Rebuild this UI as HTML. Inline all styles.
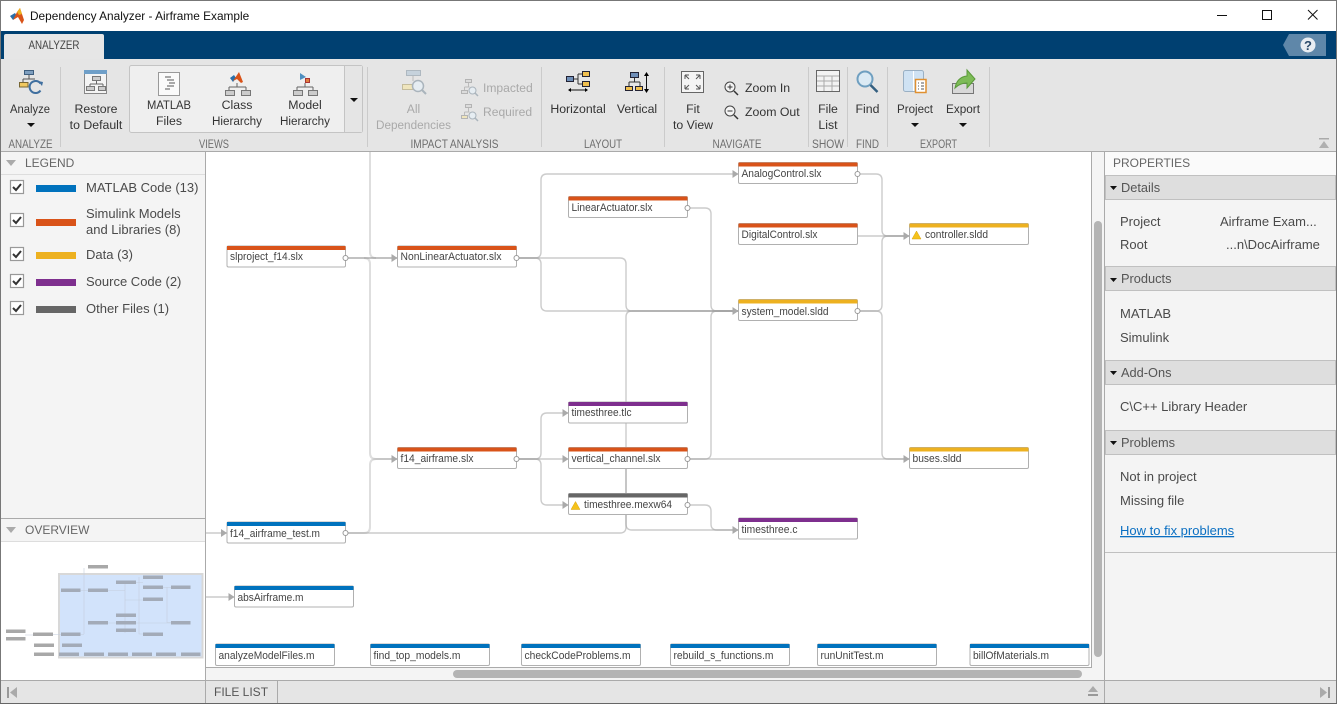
<!DOCTYPE html>
<html><head><meta charset="utf-8"><title>Dependency Analyzer - Airframe Example</title>
<style>
html,body{margin:0;padding:0;background:#fff;overflow:hidden}
svg{display:block;font-family:"Liberation Sans",Arial,sans-serif}
.b{font-size:12.300px;fill:#333}
.m{text-anchor:middle}
.g{font-size:11.500px;fill:#6e6e6e;text-anchor:middle}
.d{font-size:12.100px;fill:#a9a9a9}
.h{font-size:12px;fill:#666}
.s{font-size:12.800px;fill:#555}
.n{font-size:11px;fill:#444}
.l{font-size:13px;fill:#4a4a4a}
.w path{fill:none;stroke:#999;stroke-width:1.400;stroke-opacity:.5}
.w path.t{stroke-width:2;stroke-opacity:.32}
.a{fill:#aaa}
.p{fill:#fff;stroke:#999;stroke-width:1}
.nb{fill:#fff;stroke:#b0b0b0;stroke-width:1}
.o{fill:#a3abb8}
.o2{fill:#a8a8a8}
</style></head><body>
<svg xmlns="http://www.w3.org/2000/svg" width="1337" height="704" viewBox="0 0 1337 704">
<rect width="1337" height="704" fill="#fff"/>
<!-- title -->
<polygon points="10,16 15,13 17,16 13,20" fill="#2a6fa8"/>
<polygon points="13,20 17,12 20,8 24,20 22,24 18,17" fill="#d95319"/>
<polygon points="17,12 20,8 22,14 19,15" fill="#edb120"/>
<text x="30" y="20" style="font-size:11.850px" fill="#111">Dependency Analyzer - Airframe Example</text>
<rect x="1217" y="15" width="10" height="1" fill="#111"/>
<rect x="1262.500" y="10.500" width="9" height="9" fill="none" stroke="#111"/>
<path d="M1308 10l9.500 9.500M1317.500 10L1308 19.500" stroke="#111" fill="none"/>
<!-- blue bar -->
<rect x="0" y="31" width="1337" height="28" fill="#004071"/>
<path d="M4 59V36q0-2 2-2h96q2 0 2 2v23z" fill="#e6e6e6"/>
<text x="54" y="49" style="font-size:11.500px" fill="#444" text-anchor="middle" textLength="51" lengthAdjust="spacingAndGlyphs">ANALYZER</text>
<polygon points="1283,45 1289,34 1326,34 1326,56 1289,56" fill="#5f87a9"/>
<circle cx="1308" cy="45" r="7.500" fill="#e9edf2"/>
<text x="1308" y="50" style="font-size:13px" font-weight="bold" fill="#2b4a6a" text-anchor="middle">?</text>
<!-- ribbon -->
<rect x="0" y="59" width="1337" height="92" fill="#e5e5e5"/>
<rect x="0" y="151" width="1337" height="1" fill="#aaa"/>
<g fill="#cbcbcb">
<rect x="60" y="67" width="1" height="80"/><rect x="367" y="67" width="1" height="80"/><rect x="541" y="67" width="1" height="80"/><rect x="664" y="67" width="1" height="80"/><rect x="808" y="67" width="1" height="80"/><rect x="847" y="67" width="1" height="80"/><rect x="887" y="67" width="1" height="80"/><rect x="989" y="67" width="1" height="80"/>
</g>
<text class="g" x="30.500" y="148" textLength="44" lengthAdjust="spacingAndGlyphs">ANALYZE</text>
<text class="g" x="214" y="148" textLength="30" lengthAdjust="spacingAndGlyphs">VIEWS</text>
<text class="g" x="454.500" y="148" textLength="88" lengthAdjust="spacingAndGlyphs">IMPACT ANALYSIS</text>
<text class="g" x="603" y="148" textLength="38" lengthAdjust="spacingAndGlyphs">LAYOUT</text>
<text class="g" x="737" y="148" textLength="49" lengthAdjust="spacingAndGlyphs">NAVIGATE</text>
<text class="g" x="828" y="148" textLength="32" lengthAdjust="spacingAndGlyphs">SHOW</text>
<text class="g" x="867.500" y="148" textLength="23" lengthAdjust="spacingAndGlyphs">FIND</text>
<text class="g" x="938.500" y="148" textLength="37" lengthAdjust="spacingAndGlyphs">EXPORT</text>
<!-- gallery -->
<rect x="129.500" y="65.500" width="233" height="67" rx="2" fill="#efefef" stroke="#c4c4c4"/>
<rect x="344" y="66" width="18" height="66" fill="#e5e5e5"/>
<rect x="344" y="66" width="1" height="66" fill="#c4c4c4"/>
<polygon points="350,98 358,98 354,102" fill="#111"/>
<!-- analyze icon -->
<rect x="24.500" y="70.500" width="9" height="4" fill="#7f9fbf" stroke="#3f5f7f"/>
<path d="M29 75v4M23 79h12M23 79v3" stroke="#555" fill="none"/>
<rect x="19.500" y="82.500" width="8.500" height="4.500" fill="#f0c860" stroke="#776633"/>
<path d="M40.500 83.500A6 6 0 1 0 40.500 90.500" fill="none" stroke="#3f6f9f" stroke-width="2"/>
<path d="M38 81l5 1-1 4z" fill="#3f6f9f"/>
<text class="b m" x="30" y="113" textLength="40" lengthAdjust="spacingAndGlyphs">Analyze</text>
<polygon points="27,123 35,123 31,127" fill="#111"/>
<!-- restore icon -->
<rect x="84.500" y="70.500" width="22" height="23" fill="#f4f4f4" stroke="#888"/>
<rect x="84" y="70" width="23" height="4" fill="#6f9fc8"/>
<rect x="92.500" y="76.500" width="8" height="4" fill="#ccc" stroke="#777"/>
<path d="M96.500 81v3M90 84h13M90 84v2M103 84v2" stroke="#666" fill="none"/>
<rect x="86.500" y="86.500" width="8" height="4" fill="#ccc" stroke="#777"/>
<rect x="98.500" y="86.500" width="7" height="4" fill="#ccc" stroke="#777"/>
<text class="b m" x="96" y="113">Restore</text>
<text class="b m" x="96" y="129">to Default</text>
<!-- matlab files -->
<rect x="158.500" y="72.500" width="21" height="23" fill="#fafafa" stroke="#999"/>
<path d="M165 77h6M167 80h7M169 83h6M167 86h7M165 89h5" stroke="#555" fill="none"/>
<text class="b m" x="169" y="109" textLength="44" lengthAdjust="spacingAndGlyphs">MATLAB</text>
<text class="b m" x="169" y="125">Files</text>
<!-- class hierarchy -->
<polygon points="230,78 234,75 236,78 233,82" fill="#2a6fa8"/>
<polygon points="233,81 237,75 239,72 243,82 241,83 237,79" fill="#d95319"/>
<path d="M237 83v4M229 87h17M229 87v3M246 87v3" stroke="#666" fill="none"/>
<rect x="225.500" y="90.500" width="9" height="5" fill="#ccc" stroke="#777"/>
<rect x="241.500" y="90.500" width="9" height="5" fill="#ccc" stroke="#777"/>
<text class="b m" x="237" y="109">Class</text>
<text class="b m" x="237" y="125" textLength="50" lengthAdjust="spacingAndGlyphs">Hierarchy</text>
<!-- model hierarchy -->
<polygon points="300,73 300,80 306,77" fill="#4f8fc0"/>
<rect x="305.500" y="78.500" width="4" height="4" fill="#e08040" stroke="#a33"/>
<path d="M305 83v4M297 87h16M297 87v3M313 87v3" stroke="#666" fill="none"/>
<rect x="293.500" y="90.500" width="9" height="5" fill="#ccc" stroke="#777"/>
<rect x="308.500" y="90.500" width="9" height="5" fill="#ccc" stroke="#777"/>
<text class="b m" x="305" y="109">Model</text>
<text class="b m" x="305" y="125" textLength="50" lengthAdjust="spacingAndGlyphs">Hierarchy</text>
<!-- all deps -->
<rect x="406.500" y="70.500" width="14" height="5" fill="#c6d2dc" stroke="#aeb8c0"/>
<path d="M413 76v5" stroke="#bbb"/>
<rect x="402.500" y="84.500" width="11" height="5" fill="#efe5bd" stroke="#c4bc9c"/>
<circle cx="418" cy="86" r="5.500" fill="#e6edf2" stroke="#aab4bc" stroke-width="1.500"/>
<path d="M422 90l4 4" stroke="#aab4bc" stroke-width="2"/>
<text class="d m" x="413.500" y="113">All</text>
<text class="d m" x="413.500" y="129" textLength="75" lengthAdjust="spacingAndGlyphs">Dependencies</text>
<g stroke="#b4b4b4" fill="#dcdcdc">
<rect x="465.500" y="79.500" width="6" height="3"/><rect x="461.500" y="90.500" width="6" height="3"/>
<rect x="465.500" y="104.500" width="6" height="3"/><rect x="461.500" y="115.500" width="6" height="3" fill="#efe5bd"/>
</g>
<path d="M468.500 83v4M464.500 87h5M464.500 87v3M468.500 108v4M464.500 112h5M464.500 112v3" stroke="#bbb" fill="none"/>
<circle cx="472.500" cy="90.500" r="3.500" fill="#e6edf2" stroke="#aab4bc"/><path d="M475 93l3 3" stroke="#aab4bc" stroke-width="1.500"/>
<circle cx="472.500" cy="115.500" r="3.500" fill="#e6edf2" stroke="#aab4bc"/><path d="M475 118l3 3" stroke="#aab4bc" stroke-width="1.500"/>
<text class="d" x="483" y="92">Impacted</text>
<text class="d" x="483" y="116">Required</text>
<!-- horizontal -->
<rect x="566.500" y="76.500" width="7" height="5" fill="#6f8fb8" stroke="#223"/>
<rect x="582.500" y="71.500" width="7" height="5" fill="#f0c050" stroke="#223"/>
<rect x="582.500" y="81.500" width="7" height="5" fill="#f0c050" stroke="#223"/>
<path d="M574 79h4M578 74v10M578 74h4M578 84h4" stroke="#333" fill="none"/>
<path d="M569 90h16" stroke="#111"/><polygon points="568,90 571,88 571,92"/><polygon points="588,90 585,88 585,92"/>
<text class="b m" x="578" y="113">Horizontal</text>
<!-- vertical -->
<rect x="630.500" y="72.500" width="8" height="5" fill="#6f8fb8" stroke="#223"/>
<rect x="625.500" y="86.500" width="7" height="4" fill="#f0c050" stroke="#223"/>
<rect x="635.500" y="86.500" width="7" height="4" fill="#f0c050" stroke="#223"/>
<path d="M634.500 78v4M629 82h11M629 82v4M640 82v4" stroke="#333" fill="none"/>
<path d="M646.500 74v17" stroke="#111"/><polygon points="646.500,72 644,76 649,76"/><polygon points="646.500,93 644,89 649,89"/>
<text class="b m" x="637" y="113">Vertical</text>
<!-- fit -->
<rect x="681.500" y="71.500" width="22" height="21" fill="#f4f4f4" stroke="#666"/>
<path d="M685 75l4 4M685 75h4M685 75v4M700 75l-4 4M700 75h-4M700 75v4M685 89l4-4M685 89h4M685 89v-4M700 89l-4-4M700 89h-4M700 89v-4" stroke="#555" fill="none"/>
<text class="b m" x="693" y="113">Fit</text>
<text class="b m" x="693" y="129">to View</text>
<!-- zoom -->
<circle cx="730" cy="87" r="5" fill="#f4f4f4" stroke="#444"/><path d="M734 91l4 4" stroke="#333" stroke-width="1.500"/><path d="M727.500 87h5M730 84.500v5" stroke="#333"/>
<circle cx="730" cy="111" r="5" fill="#f4f4f4" stroke="#444"/><path d="M734 115l4 4" stroke="#333" stroke-width="1.500"/><path d="M727.500 111h5" stroke="#333"/>
<text class="b" x="745" y="92">Zoom In</text>
<text class="b" x="745" y="116">Zoom Out</text>
<!-- file list -->
<rect x="816.500" y="70.500" width="23" height="21" fill="#f2f2f2" stroke="#666"/>
<path d="M817 76h22M817 81h22M817 86h22M824 76v15M832 76v15" stroke="#aaa" fill="none"/>
<text class="b m" x="828" y="113">File</text>
<text class="b m" x="828" y="129">List</text>
<!-- find -->
<circle cx="865" cy="79" r="7.500" fill="#dbeaf4" stroke="#6f9fc0" stroke-width="2"/>
<path d="M870.500 85l7 7" stroke="#345f80" stroke-width="2.500"/>
<text class="b m" x="867.500" y="113">Find</text>
<!-- project -->
<rect x="903.500" y="70.500" width="20" height="21" rx="2" fill="#cfe2f3" stroke="#9ab0c4"/>
<path d="M913.500 71v20" stroke="#fff"/>
<rect x="915.500" y="79.500" width="10.500" height="13" fill="#fff" stroke="#e09030" stroke-width="1.500"/>
<path d="M918 83h1M921 83h3M918 86h1M921 86h3M918 89h1M921 89h3" stroke="#555"/>
<text class="b m" x="915" y="113" textLength="36" lengthAdjust="spacingAndGlyphs">Project</text>
<polygon points="911,123 919,123 915,127" fill="#111"/>
<!-- export -->
<rect x="952.500" y="83.500" width="21" height="10" fill="#d8d8d8" stroke="#777"/>
<path d="M955 88q2-11 12-12v-6l8 9-8 9v-5q-7 0-12 5z" fill="#7dbb57" stroke="#5a9a3a"/>
<text class="b m" x="963" y="113" textLength="34" lengthAdjust="spacingAndGlyphs">Export</text>
<polygon points="959,123 967,123 963,127" fill="#111"/>
<rect x="1319" y="138" width="10" height="1.500" fill="#aaa"/>
<polygon points="1319,148 1329,148 1324,141" fill="#b0b0b0"/>

<!-- left panel -->
<rect x="1" y="152" width="204" height="367" fill="#f4f4f4"/>
<rect x="1" y="174" width="204" height="1" fill="#ddd"/>
<polygon points="6,160 16,160 11,166" fill="#aaa"/>
<text class="h" x="25" y="167">LEGEND</text>
<g fill="#fff" stroke="#999" stroke-width="1.200">
<rect x="10.500" y="180.500" width="13" height="13"/><rect x="10.500" y="213.500" width="13" height="13"/><rect x="10.500" y="247.500" width="13" height="13"/><rect x="10.500" y="274.500" width="13" height="13"/><rect x="10.500" y="301.500" width="13" height="13"/>
</g>
<g fill="none" stroke="#333" stroke-width="2">
<path d="M13 187l3 3 5-6"/><path d="M13 220l3 3 5-6"/><path d="M13 254l3 3 5-6"/><path d="M13 281l3 3 5-6"/><path d="M13 308l3 3 5-6"/>
</g>
<rect x="36" y="185" width="40" height="7" fill="#0072bd"/>
<rect x="36" y="219" width="40" height="7" fill="#d95319"/>
<rect x="36" y="252" width="40" height="7" fill="#edb120"/>
<rect x="36" y="279" width="40" height="7" fill="#7e2f8e"/>
<rect x="36" y="306" width="40" height="7" fill="#666"/>
<text class="l" x="86" y="192">MATLAB Code (13)</text>
<text class="l" x="86" y="218">Simulink Models</text>
<text class="l" x="86" y="234">and Libraries (8)</text>
<text class="l" x="86" y="259">Data (3)</text>
<text class="l" x="86" y="286">Source Code (2)</text>
<text class="l" x="86" y="313">Other Files (1)</text>
<!-- overview -->
<rect x="1" y="518" width="204" height="1" fill="#aaa"/>
<rect x="1" y="519" width="204" height="22" fill="#f4f4f4"/>
<rect x="1" y="541" width="204" height="1" fill="#ddd"/>
<polygon points="6,527 16,527 11,533" fill="#aaa"/>
<text class="h" x="25" y="534">OVERVIEW</text>
<rect x="59" y="574" width="143.500" height="83.500" fill="#d2e3fb" stroke="#d8d8d8" stroke-width="2"/>
<g fill="none" stroke="#c4cedd" stroke-width=".6">
<path d="M80 590.500H88M108 590.500H125V600H143M125 584V600M136 582.500H143M125 622V600M108 623H116M125 615V633M136 623H171M139 577V634H143M84 568V634M80 634.500H84"/>
<path d="M163 587.500H171M167 587V622.500H171M25 635H33M53 634.500H61"/>
</g>
<g class="o">
<rect x="61" y="588.500" width="19.500" height="3.500"/><rect x="88" y="588.500" width="20" height="3.500"/><rect x="116" y="580.500" width="20" height="3.500"/><rect x="143" y="575.500" width="20" height="3.500"/><rect x="143" y="585.500" width="20" height="3.500"/><rect x="171" y="585.500" width="19.500" height="3.500"/><rect x="143" y="597.500" width="20" height="3.500"/><rect x="88" y="621" width="20" height="3.500"/><rect x="116" y="613.500" width="20" height="3.500"/><rect x="116" y="621" width="20" height="3.500"/><rect x="116" y="628.500" width="20" height="3.500"/><rect x="143" y="632.500" width="20" height="3.500"/><rect x="171" y="621" width="19.500" height="3.500"/><rect x="61" y="632.500" width="19.500" height="3.500"/><rect x="62" y="643.500" width="20" height="3.500"/><rect x="59" y="652.500" width="20" height="3.500"/><rect x="84" y="652.500" width="20" height="3.500"/><rect x="108" y="652.500" width="20" height="3.500"/><rect x="132" y="652.500" width="20" height="3.500"/><rect x="156" y="652.500" width="20" height="3.500"/><rect x="181" y="652.500" width="19.500" height="3.500"/>
</g>
<g class="o2">
<rect x="88" y="565" width="20" height="3.500"/><rect x="6" y="629.500" width="19.500" height="3.500"/><rect x="6" y="637" width="19.500" height="3.500"/><rect x="33" y="632.500" width="20" height="3.500"/><rect x="34" y="643.500" width="20" height="3.500"/><rect x="34" y="652.500" width="20" height="3.500"/>
</g>

<!-- canvas divider + scroll -->
<rect x="205" y="152" width="1" height="528" fill="#aaa"/>
<rect x="1092" y="152" width="13" height="528" fill="#f4f4f4"/>
<rect x="206" y="668" width="899" height="12" fill="#f4f4f4"/>
<rect x="206" y="667" width="886" height="1" fill="#aaa"/>
<rect x="1091" y="152" width="1" height="516" fill="#aaa"/>
<rect x="1104" y="152" width="1" height="528" fill="#aaa"/>
<rect x="1094" y="221" width="8" height="436" rx="4" fill="#b4b4b4"/>
<rect x="453" y="670" width="629" height="8" rx="4" fill="#b4b4b4"/>

<!-- wires -->
<g class="w">
<path d="M345 258H397"/>
<path d="M345 258H397"/>
<path class="t" d="M370 152V252Q370 258 376 258"/>
<path class="t" d="M370 264Q370 258 364 258"/>
<path class="t" d="M370 264V453Q370 459 376 459H397"/>
<path class="t" d="M370 465Q370 459 376 459H397"/>
<path class="t" d="M345 533H364Q370 533 370 527V465"/>
<path d="M345 533H620Q626 533 626 527V317Q626 311 632 311H738"/>
<path d="M517 258H535Q541 258 541 264V305Q541 311 547 311H738"/>
<path d="M517 258H535Q541 258 541 252V180Q541 174 547 174H738"/>
<path d="M517 258H620Q626 258 626 264V305Q626 311 632 311H738"/>
<path d="M688 208H705Q711 208 711 214V305Q711 311 717 311H738"/>
<path d="M688 459H705Q711 459 711 453V317Q711 311 717 311H738"/>
<path d="M688 459H909"/>
<path d="M858 174H876Q882 174 882 180V230Q882 236 888 236H909"/>
<path d="M858 236H909"/>
<path d="M858 311H876Q882 311 882 305V242Q882 236 888 236H909"/>
<path d="M858 311H876Q882 311 882 317V453Q882 459 888 459H909"/>
<path d="M517 459H568"/>
<path d="M517 459H535Q541 459 541 453V419Q541 413 547 413H568"/>
<path d="M517 459H535Q541 459 541 465V499Q541 505 547 505H568"/>
<path d="M688 505H705Q711 505 711 511V524Q711 530 717 530H738"/>
<path d="M626 469V524Q626 530 632 530H738"/>
<path d="M206 533H227"/>
<path d="M206 597H234"/>
</g>
<g class="a">
<polygon points="391.500,254 397.500,258 391.500,262"/><polygon points="391.500,455 397.500,459 391.500,463"/>
<polygon points="732.500,170 738.500,174 732.500,178"/><polygon points="732.500,307 738.500,311 732.500,315"/>
<polygon points="903.500,232 909.500,236 903.500,240"/><polygon points="903.500,455 909.500,459 903.500,463"/>
<polygon points="562.500,409 568.500,413 562.500,417"/><polygon points="562.500,455 568.500,459 562.500,463"/><polygon points="562.500,501 568.500,505 562.500,509"/>
<polygon points="732.500,526 738.500,530 732.500,534"/><polygon points="221,529 227,533 221,537"/><polygon points="228.500,593 234.500,597 228.500,601"/>
</g>

<!-- nodes -->
<g>
<rect class="nb" x="227" y="246" width="118.500" height="21" rx="1.500"/><rect x="227" y="246" width="118.500" height="4" fill="#d95319"/><text class="n" x="230" y="260" textLength="73" lengthAdjust="spacingAndGlyphs">slproject_f14.slx</text>
<rect class="nb" x="397.500" y="246" width="119" height="21" rx="1.500"/><rect x="397.500" y="246" width="119" height="4" fill="#d95319"/><text class="n" x="400.500" y="260" textLength="101" lengthAdjust="spacingAndGlyphs">NonLinearActuator.slx</text>
<rect class="nb" x="738.500" y="162.500" width="119" height="21" rx="1.500"/><rect x="738.500" y="162.500" width="119" height="4" fill="#d95319"/><text class="n" x="741.500" y="177" textLength="80" lengthAdjust="spacingAndGlyphs">AnalogControl.slx</text>
<rect class="nb" x="568.500" y="196.500" width="119" height="21" rx="1.500"/><rect x="568.500" y="196.500" width="119" height="4" fill="#d95319"/><text class="n" x="571.500" y="211" textLength="81" lengthAdjust="spacingAndGlyphs">LinearActuator.slx</text>
<rect class="nb" x="738.500" y="223.500" width="119" height="21" rx="1.500"/><rect x="738.500" y="223.500" width="119" height="4" fill="#d95319"/><text class="n" x="741.500" y="238" textLength="76" lengthAdjust="spacingAndGlyphs">DigitalControl.slx</text>
<rect class="nb" x="909.500" y="223.500" width="119" height="21" rx="1.500"/><rect x="909.500" y="223.500" width="119" height="4" fill="#edb120"/><text class="n" x="925" y="238" textLength="63" lengthAdjust="spacingAndGlyphs">controller.sldd</text>
<rect class="nb" x="738.500" y="299.500" width="119" height="21" rx="1.500"/><rect x="738.500" y="299.500" width="119" height="4" fill="#edb120"/><text class="n" x="741.500" y="315" textLength="87" lengthAdjust="spacingAndGlyphs">system_model.sldd</text>
<rect class="nb" x="568.500" y="402" width="119" height="21" rx="1.500"/><rect x="568.500" y="402" width="119" height="4" fill="#7e2f8e"/><text class="n" x="571.500" y="416" textLength="60" lengthAdjust="spacingAndGlyphs">timesthree.tlc</text>
<rect class="nb" x="397.500" y="447.500" width="119" height="21" rx="1.500"/><rect x="397.500" y="447.500" width="119" height="4" fill="#d95319"/><text class="n" x="400.500" y="462" textLength="73" lengthAdjust="spacingAndGlyphs">f14_airframe.slx</text>
<rect class="nb" x="568.500" y="447.500" width="119" height="21" rx="1.500"/><rect x="568.500" y="447.500" width="119" height="4" fill="#d95319"/><text class="n" x="571.500" y="462" textLength="89" lengthAdjust="spacingAndGlyphs">vertical_channel.slx</text>
<rect class="nb" x="909.500" y="447.500" width="119" height="21" rx="1.500"/><rect x="909.500" y="447.500" width="119" height="4" fill="#edb120"/><text class="n" x="912.500" y="462" textLength="49" lengthAdjust="spacingAndGlyphs">buses.sldd</text>
<rect class="nb" x="568.500" y="493.500" width="119" height="21" rx="1.500"/><rect x="568.500" y="493.500" width="119" height="4" fill="#666"/><text class="n" x="584" y="508" textLength="88" lengthAdjust="spacingAndGlyphs">timesthree.mexw64</text>
<rect class="nb" x="738.500" y="518" width="119" height="21" rx="1.500"/><rect x="738.500" y="518" width="119" height="4" fill="#7e2f8e"/><text class="n" x="741.500" y="533" textLength="56" lengthAdjust="spacingAndGlyphs">timesthree.c</text>
<rect class="nb" x="227" y="522" width="118.500" height="21" rx="1.500"/><rect x="227" y="522" width="118.500" height="4" fill="#0072bd"/><text class="n" x="230" y="537" textLength="90" lengthAdjust="spacingAndGlyphs">f14_airframe_test.m</text>
<rect class="nb" x="234.500" y="586" width="119" height="21" rx="1.500"/><rect x="234.500" y="586" width="119" height="4" fill="#0072bd"/><text class="n" x="237.500" y="601" textLength="66" lengthAdjust="spacingAndGlyphs">absAirframe.m</text>
<rect class="nb" x="215.500" y="644" width="119" height="21.500" rx="1.500"/><rect x="215.500" y="644" width="119" height="4" fill="#0072bd"/><text class="n" x="218.500" y="659" textLength="96" lengthAdjust="spacingAndGlyphs">analyzeModelFiles.m</text>
<rect class="nb" x="370.500" y="644" width="119" height="21.500" rx="1.500"/><rect x="370.500" y="644" width="119" height="4" fill="#0072bd"/><text class="n" x="373.500" y="659" textLength="87" lengthAdjust="spacingAndGlyphs">find_top_models.m</text>
<rect class="nb" x="521.500" y="644" width="119" height="21.500" rx="1.500"/><rect x="521.500" y="644" width="119" height="4" fill="#0072bd"/><text class="n" x="524.500" y="659" textLength="106" lengthAdjust="spacingAndGlyphs">checkCodeProblems.m</text>
<rect class="nb" x="670.500" y="644" width="119" height="21.500" rx="1.500"/><rect x="670.500" y="644" width="119" height="4" fill="#0072bd"/><text class="n" x="673.500" y="659" textLength="100" lengthAdjust="spacingAndGlyphs">rebuild_s_functions.m</text>
<rect class="nb" x="817.500" y="644" width="119" height="21.500" rx="1.500"/><rect x="817.500" y="644" width="119" height="4" fill="#0072bd"/><text class="n" x="820.500" y="659" textLength="63" lengthAdjust="spacingAndGlyphs">runUnitTest.m</text>
<rect class="nb" x="970" y="644" width="119" height="21.500" rx="1.500"/><rect x="970" y="644" width="119" height="4" fill="#0072bd"/><text class="n" x="973" y="659" textLength="76" lengthAdjust="spacingAndGlyphs">billOfMaterials.m</text>
</g>
<g class="p">
<circle cx="345.500" cy="258" r="2.500"/><circle cx="516.500" cy="258" r="2.500"/><circle cx="857.500" cy="174" r="2.500"/><circle cx="687.500" cy="208" r="2.500"/><circle cx="857.500" cy="311" r="2.500"/><circle cx="687.500" cy="459" r="2.500"/><circle cx="516.500" cy="459" r="2.500"/><circle cx="687.500" cy="505" r="2.500"/><circle cx="345.500" cy="533" r="2.500"/>
</g>
<polygon points="912,239 916.500,231 921,239" fill="#f5c21b" stroke="#d8a410" stroke-width=".5"/>
<polygon points="571,509.500 575.500,501.500 580,509.500" fill="#f5c21b" stroke="#d8a410" stroke-width=".5"/>

<!-- properties -->
<rect x="1105" y="152" width="231" height="528" fill="#f4f4f4"/>
<rect x="1105" y="152" width="231" height="23" fill="#fafafa"/>
<text class="h" x="1113" y="167">PROPERTIES</text>
<g fill="#dedede" stroke="#c0c0c0">
<rect x="1105.500" y="175.500" width="230" height="24"/><rect x="1105.500" y="266.500" width="230" height="24"/><rect x="1105.500" y="360.500" width="230" height="24"/><rect x="1105.500" y="430.500" width="230" height="24"/>
</g>
<rect x="1105" y="552" width="231" height="1" fill="#c0c0c0"/>
<g fill="#111">
<polygon points="1110,186 1117,186 1113.500,190"/><polygon points="1110,278 1117,278 1113.500,282"/><polygon points="1110,371 1117,371 1113.500,375"/><polygon points="1110,441 1117,441 1113.500,445"/>
</g>
<text class="s" x="1121" y="192">Details</text>
<text class="s" x="1121" y="283">Products</text>
<text class="s" x="1121" y="377">Add-Ons</text>
<text class="s" x="1121" y="447">Problems</text>
<text class="l" x="1120" y="226">Project</text>
<text class="l" x="1220" y="226">Airframe Exam...</text>
<text class="l" x="1120" y="249">Root</text>
<text class="l" x="1226" y="249">...n\DocAirframe</text>
<text class="l" x="1120" y="318">MATLAB</text>
<text class="l" x="1120" y="342">Simulink</text>
<text class="l" x="1120" y="411">C\C++ Library Header</text>
<text class="l" x="1120" y="481">Not in project</text>
<text class="l" x="1120" y="505">Missing file</text>
<text x="1120" y="535" style="font-size:13px" fill="#0a6fc2" text-decoration="underline">How to fix problems</text>

<!-- bottom bar -->
<rect x="1" y="680" width="1335" height="23" fill="#e5e5e5"/>
<rect x="1" y="680" width="1335" height="1" fill="#aaa"/>
<rect x="205" y="680" width="1" height="23" fill="#aaa"/>
<rect x="277" y="680" width="1" height="23" fill="#aaa"/>
<rect x="1104" y="680" width="1" height="23" fill="#aaa"/>
<rect x="7" y="687" width="2" height="11" fill="#999"/><polygon points="17,687 17,698 10,692.500" fill="#aaa"/>
<text x="214" y="696" style="font-size:12px" fill="#555">FILE LIST</text>
<polygon points="1088,692 1098,692 1093,686" fill="#aaa"/><rect x="1088" y="694" width="10" height="2" fill="#999"/>
<polygon points="1320,687 1320,698 1327,692.500" fill="#aaa"/><rect x="1328" y="687" width="2" height="11" fill="#999"/>

<!-- window border -->
<rect x="0" y="0" width="1337" height="1" fill="#777"/>
<rect x="0" y="0" width="1" height="704" fill="#777"/>
<rect x="1336" y="0" width="1" height="704" fill="#777"/>
<rect x="0" y="703" width="1337" height="1" fill="#666"/>
</svg>
</body></html>
